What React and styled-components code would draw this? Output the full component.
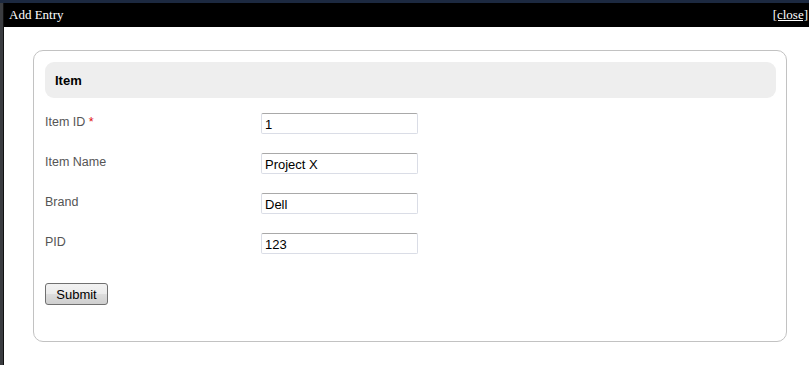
import React from 'react'
import styled, { createGlobalStyle } from 'styled-components'

const GlobalStyle = createGlobalStyle`
  html, body {
    margin: 0;
    padding: 0;
    height: 100%;
    overflow: hidden;
  }
  body {
    background: #2c2e33;
  }
`

const Backdrop = styled.div`
  width: 809px;
  height: 365px;
  box-sizing: border-box;
  padding: 3px 0 0 3px;
  background: linear-gradient(#1c2940 0, #1c2940 3px, #3a3c40 3px);
  display: flex;
`

const Dialog = styled.div`
  flex: 1;
  display: flex;
  flex-direction: column;
  border-left: 1px solid #111;
  background: #fff;
`

const TitleBar = styled.div`
  height: 24px;
  background: #000;
  color: #fff;
  display: flex;
  align-items: center;
  justify-content: space-between;
  padding: 0 1px 0 5px;
  font-family: 'Liberation Serif', 'Times New Roman', serif;
  font-size: 13px;
`

const CloseLink = styled.a`
  color: #fff;
  text-decoration: underline;
  cursor: pointer;
`

const Body = styled.div`
  flex: 1;
  padding: 23px 22px 0 29px;
`

const Fieldset = styled.div`
  height: 292px;
  box-sizing: border-box;
  border: 1px solid #c2c2c2;
  border-radius: 10px;
  padding: 11px 10px 0 11px;
  font-family: 'Liberation Sans', Arial, sans-serif;
`

const Legend = styled.div`
  height: 36px;
  background: #eeeeee;
  border-radius: 9px;
  display: flex;
  align-items: center;
  padding-left: 10px;
  font-size: 13px;
  font-weight: bold;
  color: #000;
`

const Rows = styled.div`
  display: flex;
  flex-direction: column;
  gap: 19px;
  margin-top: 15px;
`

const Row = styled.div`
  display: grid;
  grid-template-columns: 216px 157px;
  align-items: center;
  height: 21px;
`

const Label = styled.label`
  font-size: 12.5px;
  color: #555;
  margin-top: -4px;
`

const Required = styled.span`
  color: #e01010;
`

const Input = styled.input`
  box-sizing: border-box;
  width: 157px;
  height: 21px;
  border: 1px solid #dadde6;
  border-top-color: #a9a9a9;
  border-radius: 2px;
  padding: 1px 3px 0;
  font-family: 'Liberation Sans', Arial, sans-serif;
  font-size: 13px;
  color: #000;
  outline: none;
`

const Submit = styled.button`
  margin-top: 29px;
  width: 63px;
  height: 22px;
  border: 1px solid #707070;
  border-radius: 3px;
  background: linear-gradient(#f2f2f2 0%, #ebebeb 50%, #dddddd 51%, #cfcfcf 100%);
  font-family: 'Liberation Sans', Arial, sans-serif;
  font-size: 13px;
  color: #000;
  padding: 0;
`

const fields = [
  { label: 'Item ID', value: '1', required: true },
  { label: 'Item Name', value: 'Project X' },
  { label: 'Brand', value: 'Dell' },
  { label: 'PID', value: '123' },
]

const App = () => {
  return (
    <>
      <GlobalStyle />
      <Backdrop>
        <Dialog>
          <TitleBar>
            <span>Add Entry</span>
            <CloseLink>[close]</CloseLink>
          </TitleBar>
          <Body>
            <Fieldset>
              <Legend>Item</Legend>
              <Rows>
                {fields.map((f) => (
                  <Row key={f.label}>
                    <Label>
                      {f.label}
                      {f.required && <Required> *</Required>}
                    </Label>
                    <Input defaultValue={f.value} />
                  </Row>
                ))}
              </Rows>
              <Submit>Submit</Submit>
            </Fieldset>
          </Body>
        </Dialog>
      </Backdrop>
    </>
  )
}

export default App
